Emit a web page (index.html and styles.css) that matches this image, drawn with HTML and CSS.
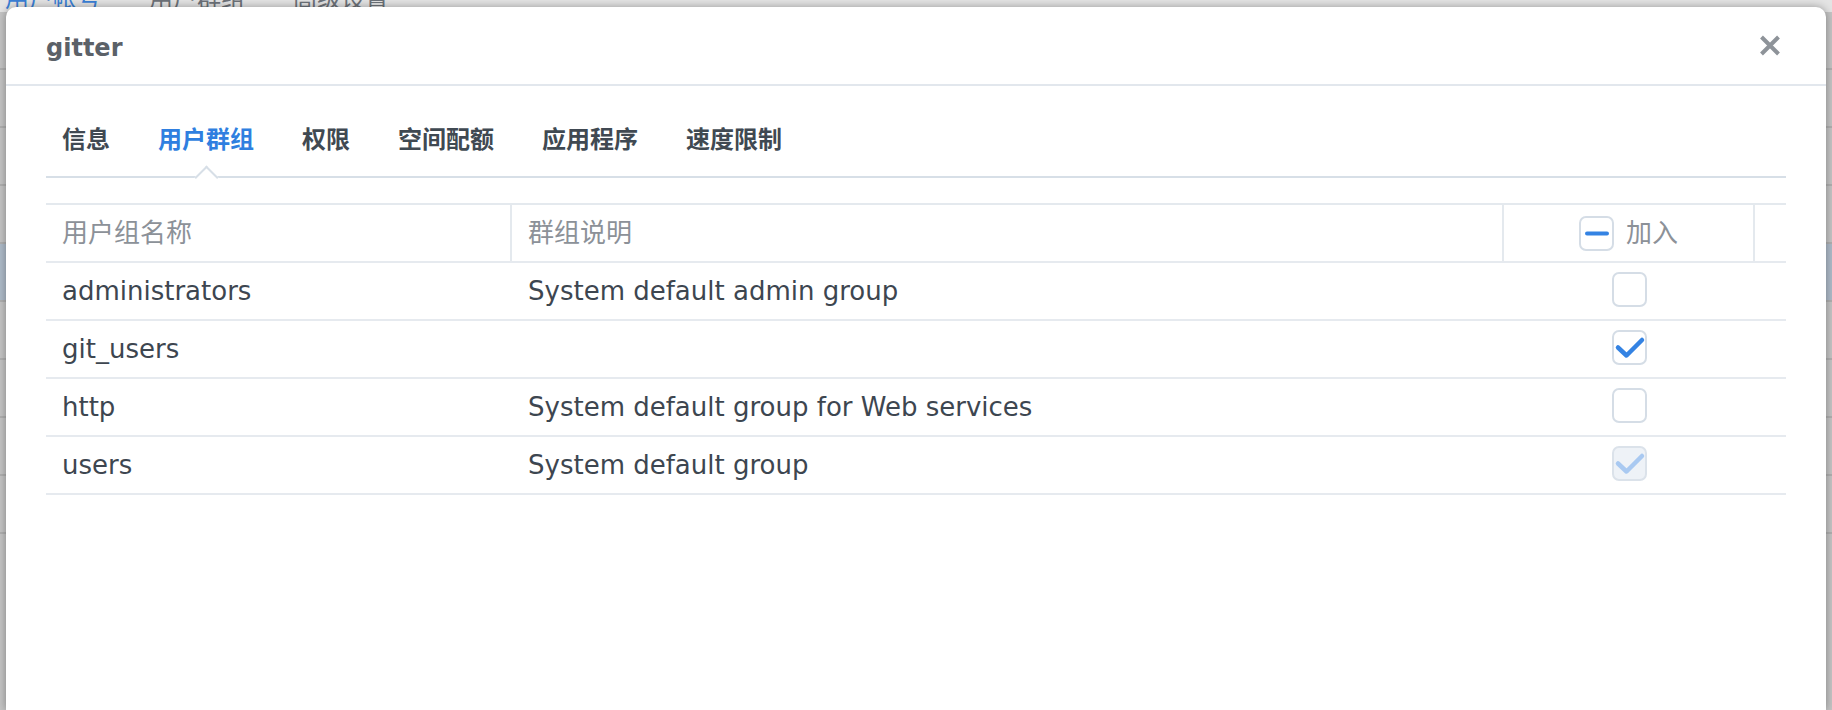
FILE: index.html
```html
<!DOCTYPE html>
<html lang="zh-CN">
<head>
<meta charset="utf-8">
<title>gitter</title>
<link rel="stylesheet" href="styles.css">
</head>
<body>
<div class="backdrop">
  <div class="bg-tabs">
    <span class="bg-tab bg-tab-active">用户帐号</span>
    <span class="bg-tab">用户群组</span>
    <span class="bg-tab">高级设置</span>
  </div>
  <div class="bg-row"></div>
  <div class="bg-row"></div>
  <div class="bg-row"></div>
  <div class="bg-row"></div>
  <div class="bg-row bg-row-selected"></div>
  <div class="bg-row"></div>
  <div class="bg-row"></div>
  <div class="bg-row"></div>
  <div class="bg-row"></div>
</div>

<div class="dialog">
  <div class="dlg-header">
    <div class="dlg-title">gitter</div>
    <button class="dlg-close" type="button" aria-label="关闭">
      <svg width="22" height="21" viewBox="0 0 22 21"><path d="M2.5 2 L19.5 19 M19.5 2 L2.5 19" stroke="#8e9399" stroke-width="4" fill="none"/></svg>
    </button>
  </div>
  <div class="dlg-body">
    <div class="tabs">
      <span class="tab">信息</span>
      <span class="tab tab-active">用户群组</span>
      <span class="tab">权限</span>
      <span class="tab">空间配额</span>
      <span class="tab">应用程序</span>
      <span class="tab">速度限制</span>
    </div>

    <div class="grid">
      <div class="grid-row grid-head">
        <div class="cell cell-sep">用户组名称</div>
        <div class="cell cell-sep">群组说明</div>
        <div class="cell cell-sep cell-center cell-join">
          <span class="cb">
            <svg width="35" height="35" viewBox="0 0 35 35"><rect x="6" y="15.5" width="24" height="4" rx="2" fill="#3483e3"/></svg>
          </span>
          <span>加入</span>
        </div>
        <div class="cell"></div>
      </div>

      <div class="grid-row">
        <div class="cell">administrators</div>
        <div class="cell">System default admin group</div>
        <div class="cell cell-center"><span class="cb cb-row"></span></div>
        <div class="cell"></div>
      </div>

      <div class="grid-row">
        <div class="cell">git_users</div>
        <div class="cell"></div>
        <div class="cell cell-center">
          <span class="cb cb-row">
            <svg width="35" height="35" viewBox="0 0 35 35"><path d="M6 17.5 L14.5 25.5 L30 10" stroke="#3483e3" stroke-width="4.5" stroke-linecap="round" stroke-linejoin="round" fill="none"/></svg>
          </span>
        </div>
        <div class="cell"></div>
      </div>

      <div class="grid-row">
        <div class="cell">http</div>
        <div class="cell">System default group for Web services</div>
        <div class="cell cell-center"><span class="cb cb-row"></span></div>
        <div class="cell"></div>
      </div>

      <div class="grid-row">
        <div class="cell">users</div>
        <div class="cell">System default group</div>
        <div class="cell cell-center">
          <span class="cb cb-row cb-disabled">
            <svg width="35" height="35" viewBox="0 0 35 35"><path d="M6 17.5 L14.5 25.5 L30 10" stroke="#a9c9f1" stroke-width="4.5" stroke-linecap="round" stroke-linejoin="round" fill="none"/></svg>
          </span>
        </div>
        <div class="cell"></div>
      </div>
    </div>
  </div>
</div>
</body>
</html>
```

FILE: styles.css
```css
html, body {
  margin: 0;
  padding: 0;
}

body {
  width: 1832px;
  height: 710px;
  overflow: hidden;
  position: relative;
  background: #bdbdbd;
  font-family: "DejaVu Sans", "Noto Sans CJK SC", sans-serif;
}

/* ---------- background window (dimmed) ---------- */
.backdrop {
  width: 100%;
  height: 100%;
  overflow: hidden;
  background: #c4c4c4;
}

.bg-tabs {
  display: flex;
  gap: 48px;
  padding-left: 5px;
  height: 12px;
  overflow: hidden;
  background: #e4e4e4;
}

.bg-tab {
  display: block;
  margin-top: -15px;
  font-size: 24px;
  line-height: 28px;
  color: #6d7279;
  white-space: nowrap;
}

.bg-tab-active {
  color: #3a7fd6;
}

.bg-row {
  height: 56px;
  border-bottom: 2px solid #b0b0b0;
}

.bg-row-selected {
  background: #aebbc9;
}

/* ---------- dialog window ---------- */
.dialog {
  position: absolute;
  left: 6px;
  top: 7px;
  width: 1820px;
  height: 703px;
  background: #ffffff;
  border-radius: 10px 10px 0 0;
  box-shadow: 0 0 9px rgba(0, 0, 0, 0.35);
}

.dlg-header {
  display: flex;
  align-items: center;
  justify-content: space-between;
  height: 73px;
  padding: 4px 40px 0 40px;
  border-bottom: 2px solid #e2e7ed;
}

.dlg-title {
  font-weight: 700;
  font-size: 24px;
  line-height: 28px;
  color: #5b6168;
}

.dlg-close {
  display: flex;
  align-items: center;
  justify-content: center;
  width: 32px;
  height: 32px;
  margin-bottom: 4px;
  padding: 0;
  border: 0;
  background: transparent;
}

.dlg-body {
  padding: 0 40px;
}

/* ---------- tabs ---------- */
.tabs {
  display: flex;
  gap: 48px;
  padding: 40px 0 22px 16px;
  border-bottom: 2px solid #d7dfe7;
}

.tab {
  position: relative;
  font-weight: 700;
  font-size: 24px;
  line-height: 28px;
  color: #404952;
  white-space: nowrap;
}

.tab-active {
  color: #2f7fe0;
}

.tab-active::after {
  content: "";
  position: absolute;
  left: calc(50% - 8.5px);
  top: 42.5px;
  width: 17px;
  height: 17px;
  box-sizing: border-box;
  background: #ffffff;
  border-top: 2px solid #d7dfe7;
  border-left: 2px solid #d7dfe7;
  transform: rotate(45deg);
}

/* ---------- table ---------- */
.grid {
  margin-top: 25px;
  border-top: 2px solid #e4e9ee;
}

.grid-row {
  display: grid;
  grid-template-columns: 466px 992px 251px 1fr;
  height: 56px;
  border-bottom: 2px solid #e6eaef;
}

.cell {
  display: flex;
  align-items: center;
  box-sizing: border-box;
  padding: 0 16px;
  font-size: 26px;
  line-height: 30px;
  color: #3d4650;
  white-space: nowrap;
}

.grid-head .cell {
  color: #8c9198;
}

.cell-sep {
  border-right: 2px solid #e4e9ee;
}

.cell-center {
  justify-content: center;
  padding: 0;
}

.cell-join {
  gap: 12px;
}

.cb {
  display: block;
  width: 35px;
  height: 35px;
  box-sizing: border-box;
  border: 2px solid #d5dde6;
  border-radius: 7px;
  background: #ffffff;
  position: relative;
}

.cb-row {
  margin-bottom: 3px;
}

.cb svg {
  position: absolute;
  left: -2px;
  top: -2px;
}

.cb-disabled {
  background: #eef2f7;
  border-color: #dbe2ea;
}
```
